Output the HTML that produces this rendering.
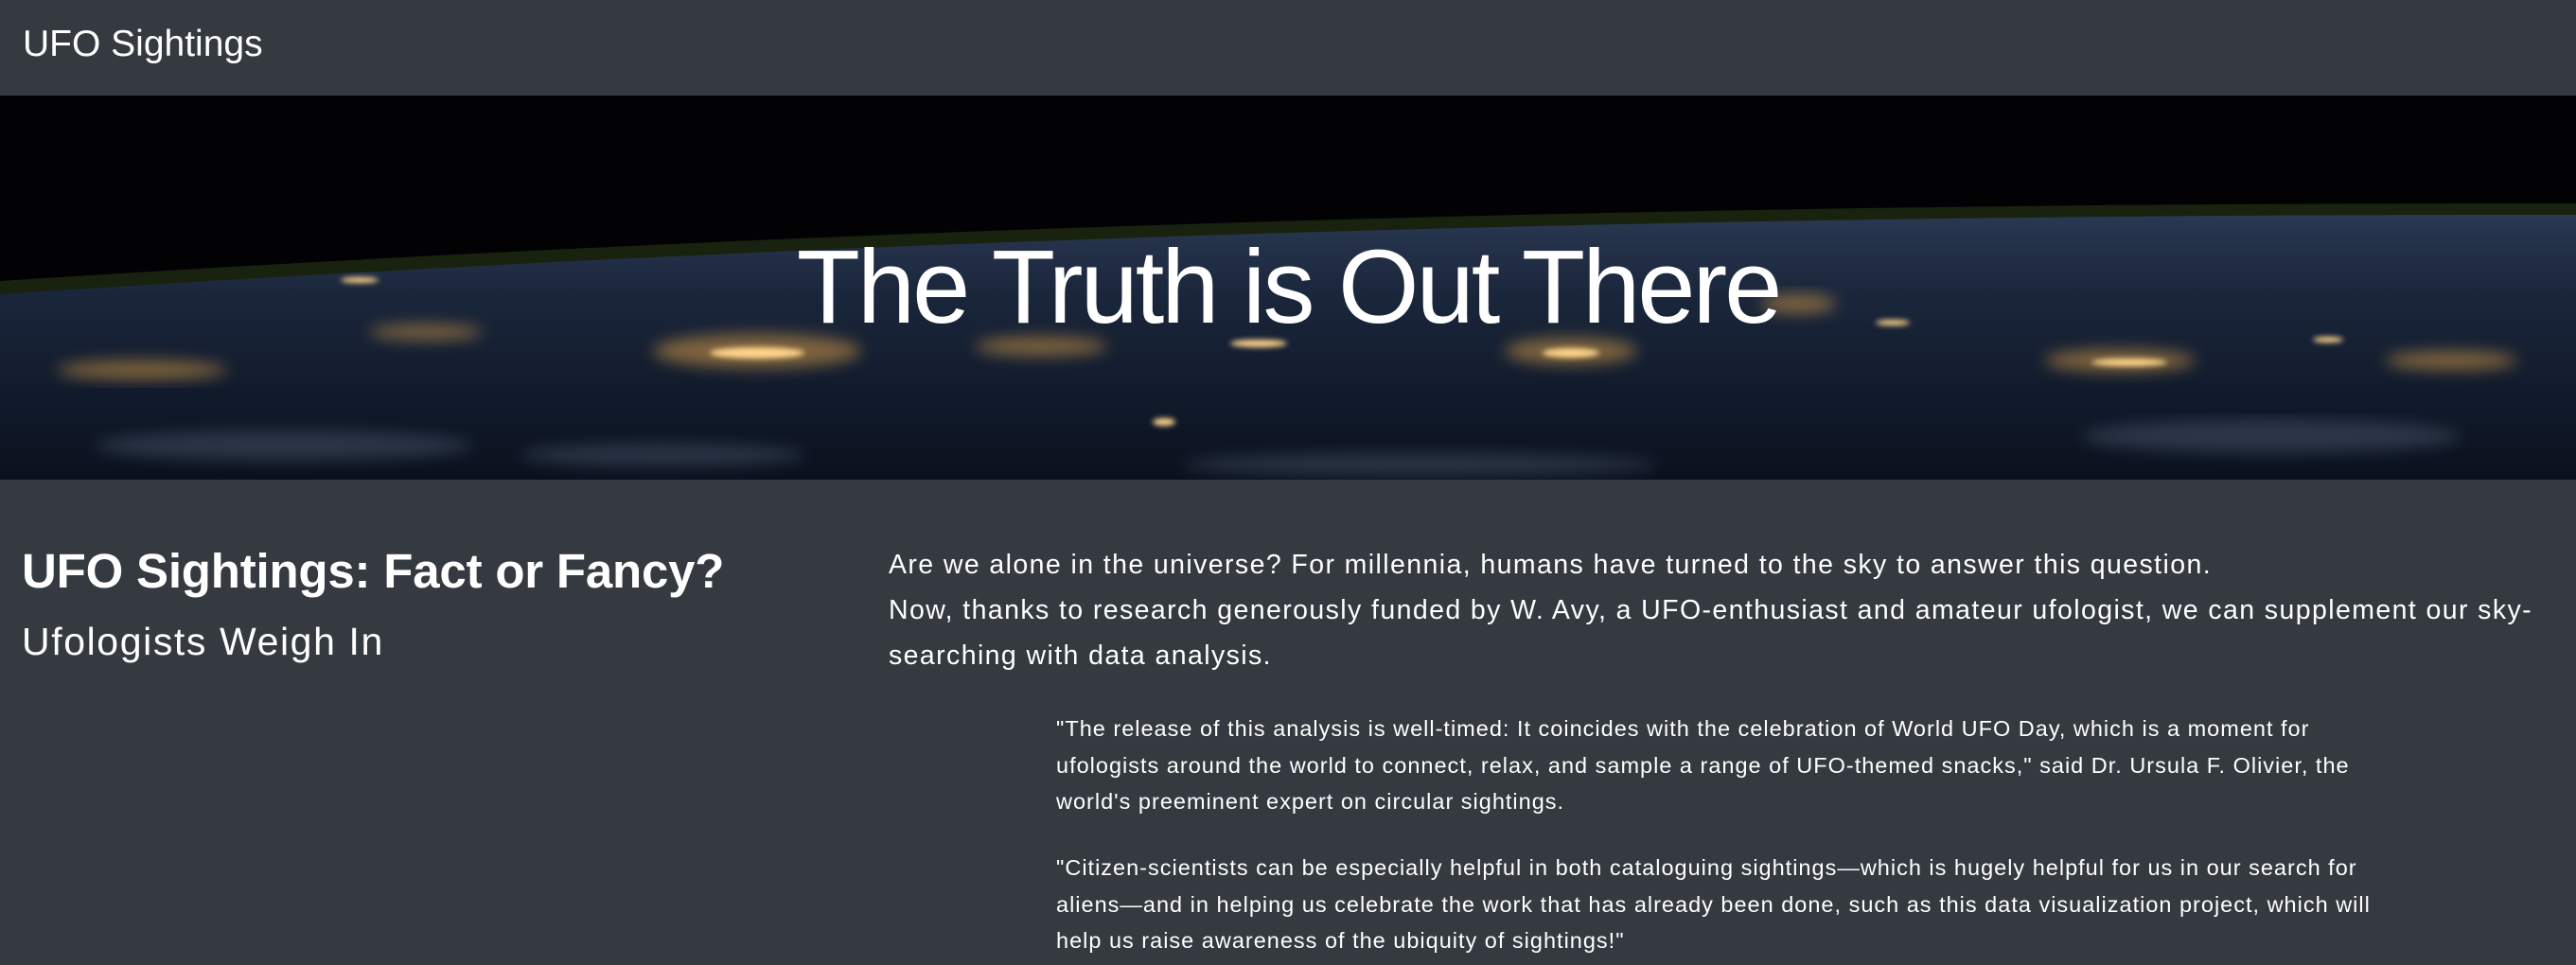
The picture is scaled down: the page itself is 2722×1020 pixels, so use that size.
<!DOCTYPE html>
<html><head><meta charset="utf-8"><style>
html,body{margin:0;padding:0;}
body{width:2722px;height:1020px;overflow:hidden;background:#343a40;color:#fff;font-family:"Liberation Sans",sans-serif;position:relative;}
.nav{position:absolute;left:0;top:0;width:2722px;height:101px;background:#343a40;}
.brand{position:absolute;left:24px;top:22px;font-size:39px;line-height:50px;}
.hero{position:absolute;left:0;top:101px;width:2722px;height:406px;overflow:hidden;background:#000;}
.hero svg{position:absolute;left:0;top:0;}
.title{position:absolute;left:0;width:2722px;top:138px;text-align:center;font-size:110px;line-height:130px;font-weight:300;letter-spacing:-3px;color:#fff;}
h1{position:absolute;left:23px;top:572px;margin:0;font-size:51px;line-height:64px;font-weight:bold;letter-spacing:-0.2px;}
h2{position:absolute;left:23px;top:650px;margin:0;font-size:41px;line-height:56px;font-weight:normal;letter-spacing:1.6px;}
.lead{position:absolute;left:939px;top:573px;width:1765px;font-size:28.5px;line-height:48px;margin:0;letter-spacing:1.4px;}
.q{position:absolute;left:1116px;width:1405px;font-size:23.5px;line-height:38.5px;margin:0;letter-spacing:1.0px;}
</style></head><body>
<div class="nav"><div class="brand">UFO Sightings</div></div>
<div class="hero">
<svg width="2722" height="406" viewBox="0 0 2722 406">
<defs>
<linearGradient id="e" x1="0" y1="0" x2="0" y2="1">
<stop offset="0" stop-color="#2a3852"/><stop offset="0.3" stop-color="#1a263b"/><stop offset="1" stop-color="#0a111e"/>
</linearGradient>
<filter id="b"><feGaussianBlur stdDeviation="8"/></filter>
<filter id="b2"><feGaussianBlur stdDeviation="3"/></filter>
</defs>
<rect width="2722" height="406" fill="#020204"/>
<path d="M0 196 Q1300 112 2722 114 L2722 130 Q1300 126 0 214Z" fill="#1e2a12" opacity="0.8"/>
<path d="M0 210 Q1300 124 2722 126 L2722 406 L0 406Z" fill="url(#e)"/>
<g filter="url(#b)" fill="#e8a84a" opacity="0.5">
<ellipse cx="800" cy="270" rx="110" ry="18"/><ellipse cx="1660" cy="270" rx="70" ry="14"/>
<ellipse cx="2240" cy="280" rx="80" ry="12"/><ellipse cx="150" cy="290" rx="90" ry="10"/>
<ellipse cx="1100" cy="265" rx="70" ry="10"/><ellipse cx="1900" cy="220" rx="40" ry="10"/>
<ellipse cx="2590" cy="280" rx="70" ry="10"/><ellipse cx="450" cy="250" rx="60" ry="8"/>
</g>
<g filter="url(#b2)" fill="#ffd58a">
<ellipse cx="800" cy="272" rx="50" ry="6"/><ellipse cx="1660" cy="272" rx="30" ry="5"/>
<ellipse cx="2250" cy="282" rx="40" ry="4"/><ellipse cx="1330" cy="262" rx="30" ry="4"/>
<ellipse cx="1230" cy="345" rx="12" ry="4"/><ellipse cx="380" cy="195" rx="20" ry="3"/>
<ellipse cx="2000" cy="240" rx="18" ry="3"/><ellipse cx="2460" cy="258" rx="16" ry="3"/>
</g>
<g filter="url(#b)" fill="#8795ad" opacity="0.25">
<ellipse cx="300" cy="370" rx="200" ry="16"/><ellipse cx="700" cy="380" rx="150" ry="12"/>
<ellipse cx="2400" cy="360" rx="200" ry="18"/><ellipse cx="1500" cy="390" rx="250" ry="12"/>
</g>
</svg>
<div class="title">The Truth is Out There</div>
</div>
<h1>UFO Sightings: Fact or Fancy?</h1>
<h2>Ufologists Weigh In</h2>
<p class="lead">Are we alone in the universe? For millennia, humans have turned to the sky to answer this question.<br>Now, thanks to research generously funded by W. Avy, a UFO-enthusiast and amateur ufologist, we can supplement our sky-searching with data analysis.</p>
<p class="q" style="top:751px">"The release of this analysis is well-timed: It coincides with the celebration of World UFO Day, which is a moment for ufologists around the world to connect, relax, and sample a range of UFO-themed snacks," said Dr. Ursula F. Olivier, the world's preeminent expert on circular sightings.</p>
<p class="q" style="top:898px">"Citizen-scientists can be especially helpful in both cataloguing sightings—which is hugely helpful for us in our search for aliens—and in helping us celebrate the work that has already been done, such as this data visualization project, which will help us raise awareness of the ubiquity of sightings!"</p>
</body></html>
